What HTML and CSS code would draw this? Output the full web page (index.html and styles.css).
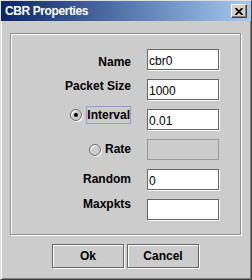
FILE: index.html
```html
<!DOCTYPE html>
<html lang="en">
<head>
    <meta charset="UTF-8">
    <title>CBR Properties</title>
    <link rel="stylesheet" href="styles.css">
</head>
<body>

    <div class="window">

        <!-- Title Bar -->
        <div class="titlebar">
            <span class="title">CBR Properties</span>
            <span class="close">
                <svg width="8" height="7" viewBox="0 0 8 7">
                    <path d="M0.5 0 L7.5 7 M7.5 0 L0.5 7" stroke="#000" stroke-width="1.7" fill="none"/>
                </svg>
            </span>
        </div>

        <div class="content">

            <!-- Properties Panel -->
            <div class="panel">
                <label class="label bottom">Name</label>
                <input class="field" type="text" value="cbr0">

                <label class="label top">Packet Size</label>
                <input class="field" type="text" value="1000">

                <div class="label top interval">
                    <span class="radio checked"></span>
                    <span class="focus">Interval</span>
                </div>
                <input class="field" type="text" value="0.01">

                <div class="label">
                    <span class="radio"></span>
                    <span>Rate</span>
                </div>
                <input class="field" type="text" disabled>

                <label class="label">Random</label>
                <input class="field" type="text" value="0">

                <label class="label top maxpkts">Maxpkts</label>
                <input class="field" type="text">
            </div>

            <!-- Dialog Buttons -->
            <div class="buttons">
                <button class="btn">Ok</button>
                <button class="btn">Cancel</button>
            </div>

        </div>
    </div>

</body>
</html>
```

FILE: styles.css
```css
body {
    margin: 0;
    font-family: "Liberation Sans", Arial, sans-serif;
    background-color: #cccccc;
}

.window {
    width: 252px;
    height: 280px;
    box-sizing: border-box;
    background-color: #cccccc;
    border: 1px solid;
    border-color: #dfdfdf #404040 #404040 #dfdfdf;
    box-shadow: inset 1px 1px 0 #fff, inset -1px -1px 0 #808080;
}

/* Title Bar */
.titlebar {
    height: 20px;
    display: flex;
    align-items: center;
    background: linear-gradient(to right, #0a246a, #a6caf0);
}

.title {
    padding-left: 4px;
    color: white;
    font-weight: bold;
    font-size: 12px;
    letter-spacing: -0.4px;
    line-height: 20px;
}

.close {
    margin-left: auto;
    margin-right: 4px;
    width: 16px;
    height: 14px;
    box-sizing: border-box;
    background-color: #d4d0c8;
    border: 1px solid;
    border-color: #fff #404040 #404040 #fff;
    box-shadow: inset -1px -1px 0 #808080;
    display: flex;
    justify-content: center;
    align-items: center;
}

.content {
    padding: 12px 10px 0 9px;
}

/* Etched Panel */
.panel {
    display: grid;
    grid-template-columns: 1fr 72px;
    grid-auto-rows: 21px;
    column-gap: 16px;
    row-gap: 9px;
    padding: 15px 21px 14px 0;
    border: 1px solid #8f8f8f;
    box-shadow: inset 1px 1px 0 #fff, 1px 1px 0 #fff;
}

.label {
    display: flex;
    justify-content: flex-end;
    align-items: center;
    gap: 4px;
    align-self: center;
    font-size: 12px;
    font-weight: bold;
    line-height: 15px;
    color: #000;
}

.label.top {
    align-self: start;
}

.label.bottom {
    align-self: end;
}

.label.maxpkts {
    margin-top: -2px;
}

.label.interval {
    margin-top: -3px;
}

.focus {
    border: 1px solid #9999cc;
    padding: 1px 0 0 0;
}

/* Radio Buttons */
.radio {
    position: relative;
    width: 12px;
    height: 12px;
    box-sizing: border-box;
    border: 1px solid #666;
    border-radius: 50%;
    background-color: #cccccc;
    box-shadow: inset 1px 1px 0 #fff, 1px 1px 0 #fff;
}

.radio.checked::after {
    content: "";
    position: absolute;
    left: 3px;
    top: 3px;
    width: 4px;
    height: 4px;
    border-radius: 50%;
    background-color: #000;
}

/* Text Fields */
.field {
    width: 72px;
    height: 21px;
    box-sizing: border-box;
    margin: 0;
    padding: 2px 1px 0;
    border: 1px solid #666;
    box-shadow: 1px 1px 0 #fff;
    background-color: #fff;
    font-family: "Liberation Sans", Arial, sans-serif;
    font-size: 12px;
    color: #000;
    outline: none;
}

.field:disabled {
    background-color: #cccccc;
    border-color: #999;
    box-shadow: none;
}

/* Buttons */
.buttons {
    display: flex;
    justify-content: center;
    gap: 3px;
    padding-top: 9px;
}

.btn {
    width: 72px;
    height: 24px;
    margin: 0;
    padding: 0;
    border: 1px solid #666;
    box-shadow: inset 1px 1px 0 #fff, 1px 1px 0 #fff;
    background-color: #cccccc;
    font-family: "Liberation Sans", Arial, sans-serif;
    font-size: 12px;
    font-weight: bold;
    color: #000;
}
```
